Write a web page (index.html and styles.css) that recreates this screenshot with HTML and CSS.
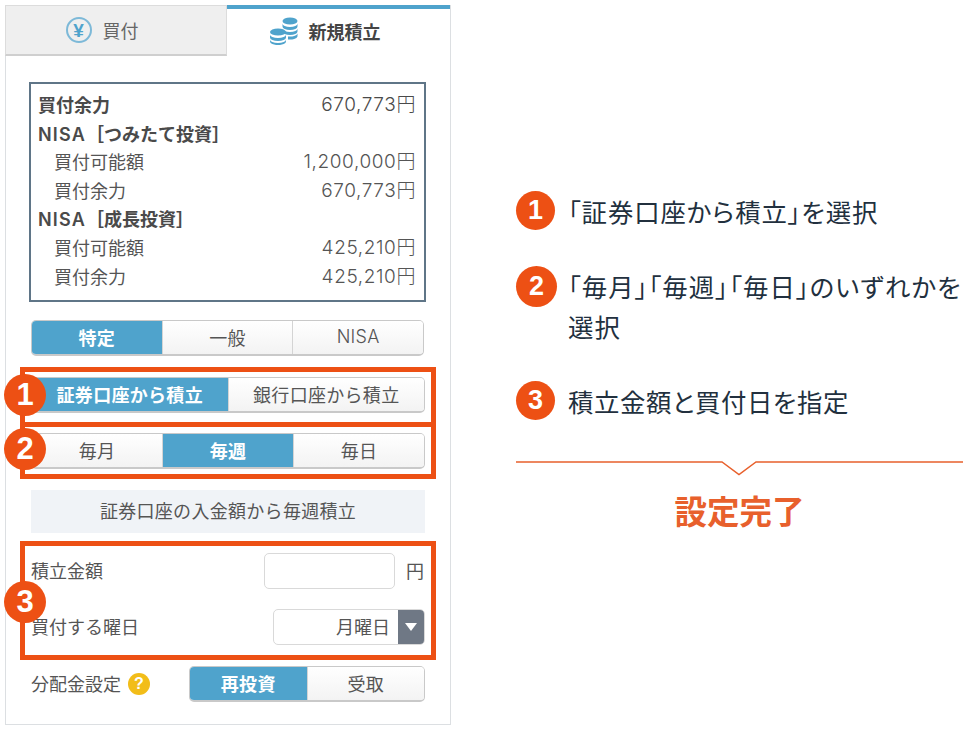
FILE: index.html
```html
<!DOCTYPE html>
<html lang="ja">
<head>
    <meta charset="UTF-8">
    <title>新規積立</title>
    <link rel="stylesheet" href="styles.css">
</head>
<body>
    <div class="panel">
        <div class="tabs">
            <div class="tab">
                <span class="yen">¥</span>
                <span>買付</span>
            </div>
            <div class="tab tab-active">
                <svg class="coins" width="28" height="28" viewBox="0 0 28 28">
                    <g fill="#4fa3cc">
                        <ellipse cx="20" cy="4" rx="7.5" ry="3.6"/>
                        <path d="M12.5 6.5a7.5 3.6 0 0 0 15 0v3a7.5 3.6 0 0 1-15 0z"/>
                        <path d="M12.5 11.5a7.5 3.6 0 0 0 15 0v3a7.5 3.6 0 0 1-15 0z"/>
                        <path d="M18 19.4a7.5 3.6 0 0 0 9.5-3v3a7.5 3.6 0 0 1-9.5 3z"/>
                        <ellipse cx="8" cy="15" rx="8" ry="3.6"/>
                        <path d="M0 17.5a8 3.6 0 0 0 16 0v3a8 3.6 0 0 1-16 0z"/>
                        <path d="M0 22.5a8 3.6 0 0 0 16 0v2a8 3.6 0 0 1-16 0z"/>
                    </g>
                </svg>
                <span>新規積立</span>
            </div>
        </div>

        <div class="panel-body">
            <div class="summary">
                <div class="row head"><span>買付余力</span><span class="amount">670,773円</span></div>
                <div class="row head"><span><span class="latin">NISA</span>［つみたて投資］</span></div>
                <div class="row sub"><span>買付可能額</span><span class="amount">1,200,000円</span></div>
                <div class="row sub"><span>買付余力</span><span class="amount">670,773円</span></div>
                <div class="row head"><span><span class="latin">NISA</span>［成長投資］</span></div>
                <div class="row sub"><span>買付可能額</span><span class="amount">425,210円</span></div>
                <div class="row sub"><span>買付余力</span><span class="amount">425,210円</span></div>
            </div>

            <div class="seg seg-account">
                <button class="on">特定</button>
                <button>一般</button>
                <button class="latin-btn">NISA</button>
            </div>

            <div class="mark mark-1">
                <span class="badge">1</span>
                <div class="seg">
                    <button class="on">証券口座から積立</button>
                    <button>銀行口座から積立</button>
                </div>
            </div>
            <div class="mark mark-2">
                <span class="badge">2</span>
                <div class="seg">
                    <button>毎月</button>
                    <button class="on">毎週</button>
                    <button>毎日</button>
                </div>
            </div>

            <div class="info">証券口座の入金額から毎週積立</div>

            <div class="mark mark-3">
                <span class="badge badge-3">3</span>
                <div class="field">
                    <span class="label">積立金額</span>
                    <div class="amount-input"></div>
                    <span class="unit">円</span>
                </div>
                <div class="field field-day">
                    <span class="label">買付する曜日</span>
                    <div class="select">
                        <span class="select-value">月曜日</span>
                        <span class="select-arrow"></span>
                    </div>
                </div>
            </div>

            <div class="field field-dist">
                <span class="label">分配金設定</span>
                <span class="help">?</span>
                <div class="seg seg-dist">
                    <button class="on">再投資</button>
                    <button>受取</button>
                </div>
            </div>
        </div>
    </div>

    <div class="guide">
        <div class="step step-1">
            <div class="step-mark"><span class="step-num">1</span></div>
            <p>「証券口座から積立」を選択</p>
        </div>
        <div class="step step-2">
            <div class="step-mark"><span class="step-num">2</span></div>
            <p>「毎月」「毎週」「毎日」のいずれかを<br>選択</p>
        </div>
        <div class="step step-3">
            <div class="step-mark"><span class="step-num">3</span></div>
            <p>積立金額と買付日を指定</p>
        </div>
        <svg class="divider" width="447" height="16" viewBox="0 0 447 16">
            <polyline points="0,1 206,1 223,13.5 240,1 447,1" fill="none" stroke="#e8602c" stroke-width="1.5"/>
        </svg>
        <div class="done">設定完了</div>
    </div>
</body>
</html>
```

FILE: styles.css
```css
* {
    box-sizing: border-box;
}

body {
    margin: 0;
    height: 730px;
    display: flex;
    overflow: hidden;
    background: #fff;
    color: #555;
    font-family: "Noto Sans CJK JP", "Noto Sans", sans-serif;
    font-size: 18px;
}

.panel {
    width: 446px;
    height: 720px;
    margin: 5px 0 0 5px;
    border: 1px solid #dcdfe2;
    border-top: 0;
}

/* tabs */
.tabs {
    display: flex;
    height: 51px;
    margin-left: -1px;
}

.tab {
    width: 222px;
    flex: none;
    display: flex;
    align-items: center;
    justify-content: center;
    gap: 11px;
    padding-right: 28px;
    background: #efefef;
    border: 1px solid #dcdcdc;
    border-bottom: 2px solid #cfcfcf;
    color: #666;
}

.tab-active {
    width: auto;
    flex: 1;
    padding-right: 27px;
    padding-bottom: 4px;
    background: #fff;
    border: 0;
    border-top: 4px solid #4fa3cc;
    color: #444;
    font-weight: 700;
}

.yen {
    width: 26px;
    height: 26px;
    border: 2px solid #7db9d8;
    border-radius: 50%;
    display: flex;
    align-items: center;
    justify-content: center;
    color: #4fa3cc;
    font-family: "Liberation Sans", sans-serif;
    font-size: 19px;
    font-weight: 700;
    line-height: 1;
}

.panel-body {
    padding: 26px 14px 0;
}

/* balance box */
.summary {
    height: 220px;
    margin: 0 10px 0 9px;
    padding: 7px 8px 9px 7px;
    border: 2px solid #5f7587;
}

.row {
    display: flex;
    justify-content: space-between;
    height: 28.6px;
    line-height: 26px;
}

.head {
    font-weight: 700;
    color: #4a4a4a;
}

.sub {
    padding-left: 16px;
}

.amount {
    font-family: Inter, "Noto Sans CJK JP", sans-serif;
    font-size: 19px;
    font-weight: 300;
    line-height: 28px;
    letter-spacing: .6px;
}

.latin {
    font-family: Inter, sans-serif;
    font-weight: 600;
    letter-spacing: 1.2px;
}

/* segmented buttons */
.seg {
    display: flex;
    height: 36px;
    margin: 0 12px 0 11px;
    border: 1px solid #c9c9c9;
    border-bottom-width: 2px;
    border-radius: 5px;
    overflow: hidden;
}

.mark .seg {
    margin: 0 6px;
}

.seg button {
    flex: 1;
    padding: 0 0 2px;
    border: 0;
    border-right: 1px solid #d4d4d4;
    background: linear-gradient(to bottom, #fff, #f3f3f3);
    color: #555;
    font-family: inherit;
    font-size: 18px;
    letter-spacing: .3px;
}

.seg button:last-child {
    border-right: 0;
}

.seg button.on {
    background: #4fa3cc;
    color: #fff;
    font-weight: 700;
}

.seg .latin-btn {
    font-family: Inter, sans-serif;
    font-weight: 300;
}

.seg-account {
    margin-top: 18px;
}

/* orange boxes */
.mark {
    position: relative;
    border: 5px solid #ed5014;
}

.mark-1 {
    height: 60px;
    margin-top: 11px;
    padding-top: 5px;
}

.mark-2 {
    height: 52px;
    border-top: 0;
    padding-top: 6px;
}

.mark-3 {
    height: 119px;
    margin-top: 8px;
    padding-top: 7px;
}

.badge {
    position: absolute;
    left: -21px;
    top: 2px;
    width: 42px;
    height: 42px;
    border-radius: 50%;
    background: #ed5014;
    color: #fff;
    font-family: "Liberation Sans", sans-serif;
    font-size: 31px;
    font-weight: 700;
    line-height: 42px;
    text-align: center;
}

.mark-2 .badge {
    top: 1px;
}

.badge-3 {
    top: 35px;
}

.info {
    height: 43px;
    margin: 11px 11px 0 11px;
    background: #f0f3f7;
    color: #555;
    line-height: 41px;
    letter-spacing: .3px;
    text-align: center;
}

/* form rows */
.field {
    display: flex;
    align-items: center;
    height: 36px;
    padding: 0 6px;
}

.label {
    margin-top: -3px;
}

.field-day {
    margin-top: 20px;
    justify-content: space-between;
}

.amount-input {
    width: 131px;
    height: 36px;
    margin-left: auto;
    border: 1px solid #d9d9d9;
    border-radius: 5px;
}

.unit {
    margin-left: 11px;
    margin-right: 1px;
    margin-top: -3px;
}

.select {
    display: flex;
    width: 152px;
    height: 36px;
    border: 1px solid #d9d9d9;
    border-radius: 5px;
    overflow: hidden;
}

.select-value {
    flex: 1;
    padding-right: 8px;
    line-height: 33px;
    text-align: right;
}

.select-arrow {
    width: 26px;
    background: #6f7885;
    display: flex;
    align-items: center;
    justify-content: center;
}

.select-arrow::after {
    content: "";
    border-left: 6px solid transparent;
    border-right: 6px solid transparent;
    border-top: 8px solid #fff;
}

.field-dist {
    margin: 6px 0 0;
    padding: 0 11px;
}

.help {
    width: 22px;
    height: 22px;
    margin-left: 7px;
    border-radius: 50%;
    background: #f2bd19;
    color: #fff;
    font-family: "Liberation Sans", sans-serif;
    font-size: 16px;
    font-weight: 700;
    line-height: 22px;
    text-align: center;
}

.seg-dist {
    width: 236px;
    margin: 0 0 0 auto;
}

/* right side steps */
.guide {
    width: 447px;
    margin-left: 65px;
    color: #22303e;
    font-size: 25.4px;
}

.step {
    display: flex;
    align-items: flex-start;
}

.step p {
    margin: 0;
    line-height: 40px;
    font-feature-settings: "palt";
    letter-spacing: .9px;
}

.step-mark {
    width: 52px;
    flex: none;
}

.step-num {
    display: block;
    width: 39px;
    height: 39px;
    border-radius: 50%;
    background: #ed5014;
    color: #fff;
    font-family: "Liberation Sans", sans-serif;
    font-size: 27px;
    font-weight: 700;
    line-height: 39px;
    text-align: center;
}

.step-1 {
    margin-top: 191px;
}

.step-2 {
    margin-top: 35px;
}

.step-2 p {
    letter-spacing: 1.1px;
}

.step-2 .step-num {
    width: 41px;
    height: 41px;
    line-height: 41px;
}

.step-3 {
    margin-top: 35px;
}

.step-3 p {
    letter-spacing: .6px;
}

.divider {
    display: block;
    margin-top: 40px;
}

.done {
    margin-top: 10px;
    color: #e8602c;
    font-size: 32.5px;
    font-weight: 700;
    line-height: 46px;
    text-align: center;
}
```
